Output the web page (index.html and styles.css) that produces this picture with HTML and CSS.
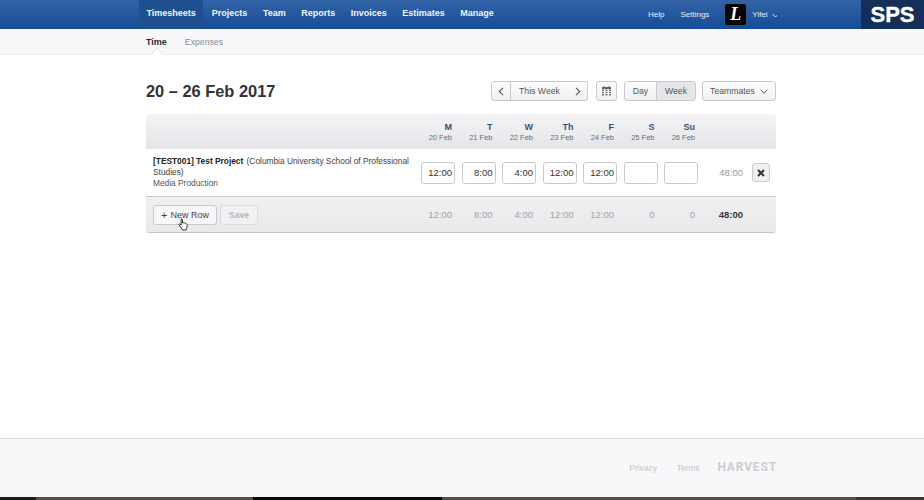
FILE: index.html
```html
<!DOCTYPE html>
<html lang="en">
<head>
<meta charset="utf-8">
<title>Timesheets</title>
<link rel="stylesheet" href="styles.css">
</head>
<body>
<div class="page">
  <header class="topbar">
    <nav class="mainnav">
      <a class="navitem active">Timesheets</a>
      <a class="navitem">Projects</a>
      <a class="navitem">Team</a>
      <a class="navitem">Reports</a>
      <a class="navitem">Invoices</a>
      <a class="navitem">Estimates</a>
      <a class="navitem">Manage</a>
    </nav>
    <div class="usernav">
      <a class="uitem">Help</a>
      <a class="uitem">Settings</a>
      <span class="avatar">L</span>
      <a class="uitem user">Yifei
        <svg class="chev" width="7" height="5" viewBox="0 0 7 5"><path d="M.5 1 3.500 4l3-3" fill="none" stroke="currentColor"/></svg>
      </a>
    </div>
    <div class="logo">SPS</div>
  </header>
  <div class="subnav">
    <a class="subitem current">Time</a>
    <a class="subitem">Expenses</a>
  </div>
  <main class="content">
    <div class="titlerow">
      <h1 class="title">20 – 26 Feb 2017</h1>
      <div class="controls">
        <div class="btngroup">
          <button class="btn arrow"><svg width="6" height="9" viewBox="0 0 6 9"><path d="M5 .8 1.300 4.500 5 8.200" fill="none" stroke="#555" stroke-width="1.100"/></svg></button>
          <button class="btn thisweek">This Week</button>
          <button class="btn arrow"><svg width="6" height="9" viewBox="0 0 6 9"><path d="M1 .8 4.700 4.500 1 8.200" fill="none" stroke="#555" stroke-width="1.100"/></svg></button>
        </div>
        <button class="btn cal"><svg width="9" height="10" viewBox="0 0 9 10"><path d="M1.500 0h1v1h-1zM6.500 0h1v1h-1zM0 1h9v2H0z" fill="#666"/><path d="M0 3.500h2V5H0zM3.500 3.500h2V5h-2zM7 3.500h2V5H7zM0 5.700h2v1.500H0zM3.500 5.700h2v1.500h-2zM7 5.700h2v1.500H7zM0 8h2v1.500H0zM3.500 8h2v1.500h-2zM7 8h2v1.500H7z" fill="#777"/></svg></button>
        <div class="btngroup">
          <button class="btn day">Day</button>
          <button class="btn week">Week</button>
        </div>
        <button class="btn mates">Teammates
          <svg width="8" height="5" viewBox="0 0 8 5"><path d="M.7 .8 4 4.100 7.300 .8" fill="none" stroke="#555"/></svg>
        </button>
      </div>
    </div>
    <section class="sheet">
      <div class="row head">
        <div class="name"></div>
        <div class="d"><b>M</b><span>20 Feb</span></div>
        <div class="d"><b>T</b><span>21 Feb</span></div>
        <div class="d"><b>W</b><span>22 Feb</span></div>
        <div class="d"><b>Th</b><span>23 Feb</span></div>
        <div class="d"><b>F</b><span>24 Feb</span></div>
        <div class="d"><b>S</b><span>25 Feb</span></div>
        <div class="d"><b>Su</b><span>26 Feb</span></div>
        <div class="tot"></div>
        <div class="act"></div>
      </div>
      <div class="row body">
        <div class="name">
          <p class="proj"><b>[TEST001] Test Project</b> (Columbia University School of Professional Studies)</p>
          <p class="task">Media Production</p>
        </div>
        <div class="d"><span class="cell">12:00</span></div>
        <div class="d"><span class="cell">8:00</span></div>
        <div class="d"><span class="cell">4:00</span></div>
        <div class="d"><span class="cell">12:00</span></div>
        <div class="d"><span class="cell">12:00</span></div>
        <div class="d"><span class="cell"></span></div>
        <div class="d"><span class="cell"></span></div>
        <div class="tot">48:00</div>
        <div class="act"><button class="del"><svg width="8" height="8" viewBox="0 0 8 8"><path d="M1 1l6 6M7 1 1 7" stroke="#333" stroke-width="2"/></svg></button></div>
      </div>
      <div class="row foot">
        <div class="name actions">
          <button class="btn newrow"><span class="plus">+</span> New Row</button>
          <button class="btn save">Save</button>
        </div>
        <div class="d">12:00</div>
        <div class="d">8:00</div>
        <div class="d">4:00</div>
        <div class="d">12:00</div>
        <div class="d">12:00</div>
        <div class="d">0</div>
        <div class="d">0</div>
        <div class="tot strong">48:00</div>
        <div class="act"></div>
      </div>
      <svg class="cursor" width="11" height="13" viewBox="0 0 11 13"><path d="M3 1c.8-.6 1.500 0 1.500.8V5l1-.3 1 .3 1 .3 1 .5c.7.4.8 1 .7 2l-.5 2.500-.7 1.700H4.500L2.500 9 1 7c-.4-.7.4-1.400 1.200-.9l1 1V1.800z" fill="#fff" stroke="#222" stroke-width=".9"/></svg>
    </section>
  </main>
  <footer class="footer">
    <a class="flink">Privacy</a>
    <a class="flink">Terms</a>
    <span class="brand">HARVEST</span>
  </footer>
  <div class="strip"></div>
</div>
</body>
</html>
```

FILE: styles.css
```css
* { box-sizing: border-box; }
html, body { margin: 0; height: 100%; }
body { font-family: "Liberation Sans", Arial, sans-serif; color: #333; background: #fff; overflow: hidden; }
.page { width: 924px; height: 500px; display: flex; flex-direction: column; }

.topbar { height: 29px; flex: none; display: flex; padding-left: 139px; background: linear-gradient(#3263a6, #164c97); position: relative; }
.mainnav { display: flex; }
.navitem { height: 29px; padding: 0 7.500px; margin-right: .5px; line-height: 27px; font-size: 9px; font-weight: bold; color: #f2f5fa; }
.navitem.active { background: #1e508f; margin-right: 1px; }
.usernav { position: absolute; left: 648px; top: 0; height: 29px; display: flex; align-items: center; }
.uitem { font-size: 8px; color: #e8eef7; line-height: 27px; }
.uitem + .uitem { margin-left: 16px; }
.avatar { width: 21px; height: 21px; margin: 0 6px 1px 16px; border-radius: 2px; background: #060606; color: #fff; font: italic bold 18px/21px "Liberation Serif", serif; text-align: center; }
.user { display: flex; align-items: center; gap: 4px; width: 25px; white-space: nowrap; overflow: hidden; }
.user .chev { flex: none; margin-top: 1px; }
.logo { position: absolute; left: 861px; top: 0; width: 63px; height: 30px; background: #14305a; border-bottom: 1px solid #6d7a90; color: #fff; font-size: 22px; font-weight: bold; line-height: 30px; text-align: center; -webkit-text-stroke: .4px #fff; }

.subnav { height: 26px; flex: none; display: flex; gap: 18px; padding-left: 146px; background: #f8f7fa; border-bottom: 1px solid #efeef1; position: relative; }
.subitem { font-size: 8.700px; line-height: 27px; color: #8a8d94; position: relative; }
.subitem.current { font-size: 9px; font-weight: bold; color: #2a2a2a; }
.subitem.current::after { content: ""; position: absolute; left: 7px; bottom: -3px; width: 7px; height: 7px; background: #fff; border-left: 1px solid #e6e6ea; border-top: 1px solid #e6e6ea; transform: rotate(45deg); }

.content { flex: 1; padding: 26px 148px 0 146px; }
.titlerow { display: flex; justify-content: space-between; align-items: center; height: 20px; margin-bottom: 13px; }
.title { margin: 0; font-size: 16.400px; font-weight: bold; color: #333; }
.controls { display: flex; }
.controls .cal { margin: 0 7px 0 8px; }
.controls .mates { margin-left: 6px; }
.btngroup { display: flex; }
.btn { height: 20px; padding: 0; border: 1px solid #c9cacf; border-radius: 3px; background: linear-gradient(#fdfdfe, #f0f0f3); font: 8.700px "Liberation Sans", Arial, sans-serif; color: #555; display: flex; align-items: center; justify-content: center; }
.btngroup .btn { border-radius: 0; margin-left: -1px; }
.btngroup .btn:first-child { border-radius: 3px 0 0 3px; margin-left: 0; }
.btngroup .btn:last-child { border-radius: 0 3px 3px 0; }
.arrow { width: 20px; }
.thisweek { width: 58px; border-right: 0; }
.btngroup .arrow:last-child { margin-left: 0; border-left: 0; }
.cal { width: 21px; }
.day { width: 33px; }
.week { width: 40px; background: #e6e6ea; }
.mates { width: 74px; gap: 5px; }

.sheet { width: 630px; position: relative; }
.row { display: grid; grid-template-columns: 270.500px repeat(7, 40.500px) 52px 1fr; }
.head { height: 35px; background: linear-gradient(#f4f4f6, #e5e5e9); border-radius: 3px 3px 0 0; }
.head .d { display: flex; flex-direction: column; align-items: flex-end; padding-right: 5px; padding-top: 8px; }
.head b { font-size: 9px; line-height: 11px; color: #33527f; }
.head span { font-size: 7.500px; line-height: 9px; color: #5c6f8c; }

.body { height: 48px; align-items: center; background: #fff; border-bottom: 1px solid #c6c7cc; }
.name { padding-left: 7px; }
.proj { margin: 0; width: 262px; font-size: 8.350px; line-height: 11px; color: #444; }
.proj b { color: #222; margin-right: 1px; }
.task { margin: 0; font-size: 8.350px; line-height: 11px; color: #555; }
.cell { display: block; width: 34px; height: 22px; margin-left: 4.500px; padding-right: 2px; border: 1px solid #c8c9ce; border-radius: 3px; font-size: 9.500px; line-height: 20px; text-align: right; color: #333; background: #fff; }
.body .tot { font-size: 9.500px; color: #9a9ca1; text-align: right; padding-right: 9px; }
.act { display: flex; justify-content: flex-start; }
.del { width: 18px; height: 19px; padding: 0; border: 1px solid #c9cacf; border-radius: 3px; background: #f0f0f2; display: flex; align-items: center; justify-content: center; }

.foot { height: 36px; align-items: center; background: linear-gradient(#f0f0f2, #e9e9ec); border-bottom: 1px solid #c6c7cc; border-radius: 0 0 3px 3px; font-size: 9.500px; color: #a0a2a6; }
.foot .d { text-align: right; padding-right: 5px; }
.foot .tot { text-align: right; padding-right: 9px; }
.foot .strong { font-weight: bold; color: #333; }
.actions { display: flex; gap: 3px; }
.newrow { width: 64px; height: 20px; background: #f7f7f8; color: #444; font-size: 9px; }
.plus { font-size: 11px; margin-right: 3px; }
.save { width: 38px; height: 20px; background: #f1f1f3; color: #b5b6ba; border-color: #dcdde0; font-weight: bold; }
.cursor { position: absolute; left: 32px; top: 104px; }

.footer { height: 59px; flex: none; margin-top: auto; background: #f8f7fa; border-top: 1px solid #d9d9dc; display: flex; align-items: center; justify-content: flex-end; padding: 0 147px 0 0; font-size: 8.300px; color: #c2c3c7; }
.flink { margin-right: 20px; }
.flink + .flink { margin-right: 18px; }
.brand { font: bold 12px "Roboto", "Liberation Sans", sans-serif; letter-spacing: .85px; color: #cdcdd0; margin-bottom: 2px; }
.strip { height: 3px; flex: none; background: linear-gradient(90deg, #1e1c1b 0 36px, #55504c 36px 253px, #0b0a0a 253px 442px, #55504c 442px 856px, #3a3735 856px); }
```
